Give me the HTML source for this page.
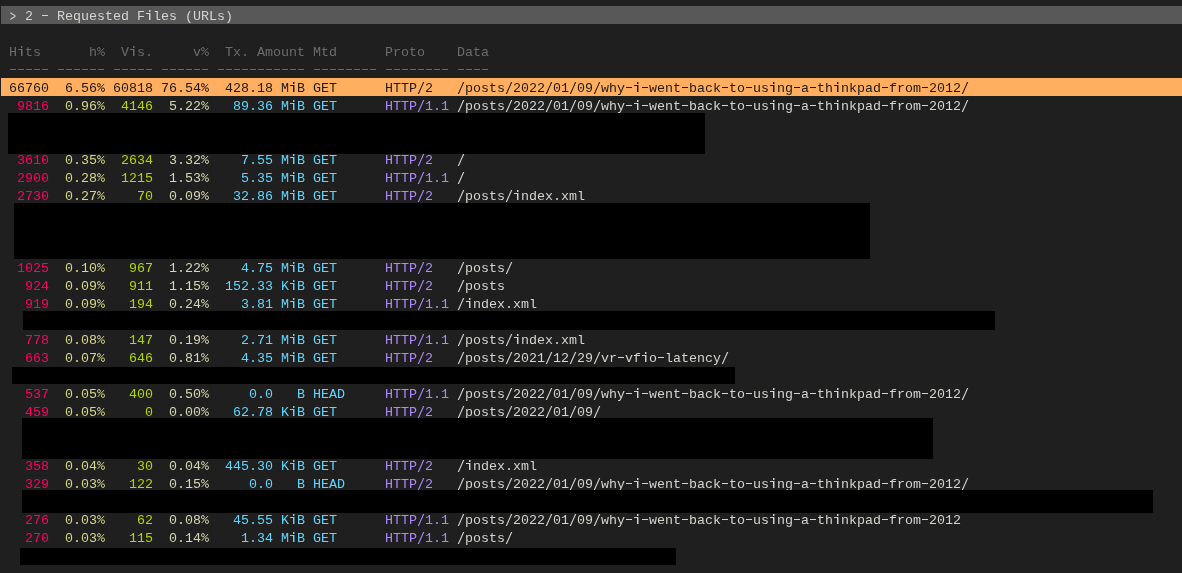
<!DOCTYPE html>
<html><head><meta charset="utf-8"><style>
html,body{margin:0;padding:0;}
body{width:1182px;height:573px;overflow:hidden;background:#1f1f1f;position:relative;
font-family:"Liberation Mono",monospace;font-size:13.333px;-webkit-font-smoothing:antialiased;}
.l{position:absolute;will-change:transform;left:1px;height:18px;line-height:18px;white-space:pre;}
.t{position:relative;top:2px;}
.bar{left:1px;right:0;background:#585858;}
.sel{left:1px;right:0;background:#ffaf5f;}
.l{color:var(--c)}.bar{--c:#d6d4ce}.sel{--c:#1a1a1a}.h{--c:#6c6c6c}
.a{--c:#ff005f;color:var(--c)}.b{--c:#d7d787;color:var(--c)}.c{--c:#afd700;color:var(--c)}.d{--c:#d7d7af;color:var(--c)}.e{--c:#5fd7ff;color:var(--c)}.f{--c:#5fd7ff;color:var(--c)}.g{--c:#af87ff;color:var(--c)}.i{--c:#d6d4ce;color:var(--c)}
.hy{position:relative;color:transparent}
.hy::after{content:"";position:absolute;left:1px;width:6px;height:1px;top:6px;background:var(--c)}
.gt{display:inline-block;transform:translateY(0.6px) scale(0.8,1.15);}
.pc{position:relative;color:transparent}
.pc svg{position:absolute;left:0;top:-3px;width:8px;height:18px;overflow:visible;fill:none;stroke:var(--c);stroke-width:0.95}
.sl{display:inline-block;transform:translateY(1.5px) scaleY(1.3);}
.ii{position:relative;color:transparent}
.ii::after{content:"";position:absolute;left:0;top:0;width:8px;height:16px;
background:linear-gradient(var(--c),var(--c)) 4px 1px/1px 2px no-repeat,linear-gradient(var(--c),var(--c)) 1px 4px/4px 1px no-repeat,linear-gradient(var(--c),var(--c)) 4px 4px/1px 7px no-repeat;}
.ii::before{content:"";position:absolute;left:0;top:0;width:8px;height:16px;opacity:.45;
background:linear-gradient(var(--c),var(--c)) 5px 1px/1px 2px no-repeat,linear-gradient(var(--c),var(--c)) 5px 4px/1px 7px no-repeat;}
.x{position:absolute;background:#000;}
</style></head><body>

<div class="l bar" style="top:6px"><span class="t"> <span class="gt">&gt;</span> 2 <span class="hy">-</span> Requested F<span class="ii">i</span>les (URLs)</span></div>
<div class="l h" style="top:42px"><span class="t"> H<span class="ii">i</span>ts      h<span class="pc">%<svg viewBox="0 0 8 18"><ellipse cx="1.9" cy="7.2" rx="1.4" ry="1.75"/><ellipse cx="6" cy="11.7" rx="1.55" ry="1.8"/><path d="M0.7 12.9L7.1 6"/></svg></span>  V<span class="ii">i</span>s.     v<span class="pc">%<svg viewBox="0 0 8 18"><ellipse cx="1.9" cy="7.2" rx="1.4" ry="1.75"/><ellipse cx="6" cy="11.7" rx="1.55" ry="1.8"/><path d="M0.7 12.9L7.1 6"/></svg></span>  Tx. Amount Mtd      Proto    Data</span></div>
<div class="l h" style="top:60px"><span class="t"> <span class="hy">-</span><span class="hy">-</span><span class="hy">-</span><span class="hy">-</span><span class="hy">-</span> <span class="hy">-</span><span class="hy">-</span><span class="hy">-</span><span class="hy">-</span><span class="hy">-</span><span class="hy">-</span> <span class="hy">-</span><span class="hy">-</span><span class="hy">-</span><span class="hy">-</span><span class="hy">-</span> <span class="hy">-</span><span class="hy">-</span><span class="hy">-</span><span class="hy">-</span><span class="hy">-</span><span class="hy">-</span> <span class="hy">-</span><span class="hy">-</span><span class="hy">-</span><span class="hy">-</span><span class="hy">-</span><span class="hy">-</span><span class="hy">-</span><span class="hy">-</span><span class="hy">-</span><span class="hy">-</span><span class="hy">-</span> <span class="hy">-</span><span class="hy">-</span><span class="hy">-</span><span class="hy">-</span><span class="hy">-</span><span class="hy">-</span><span class="hy">-</span><span class="hy">-</span> <span class="hy">-</span><span class="hy">-</span><span class="hy">-</span><span class="hy">-</span><span class="hy">-</span><span class="hy">-</span><span class="hy">-</span><span class="hy">-</span> <span class="hy">-</span><span class="hy">-</span><span class="hy">-</span><span class="hy">-</span></span></div>
<div class="l sel" style="top:78px"><span class="t"> 66760  6.56<span class="pc">%<svg viewBox="0 0 8 18"><ellipse cx="1.9" cy="7.2" rx="1.4" ry="1.75"/><ellipse cx="6" cy="11.7" rx="1.55" ry="1.8"/><path d="M0.7 12.9L7.1 6"/></svg></span> 60818 76.54<span class="pc">%<svg viewBox="0 0 8 18"><ellipse cx="1.9" cy="7.2" rx="1.4" ry="1.75"/><ellipse cx="6" cy="11.7" rx="1.55" ry="1.8"/><path d="M0.7 12.9L7.1 6"/></svg></span>  428.18 M<span class="ii">i</span>B GET      HTTP<span class="sl">/</span>2   <span class="sl">/</span>posts<span class="sl">/</span>2022<span class="sl">/</span>01<span class="sl">/</span>09<span class="sl">/</span>why<span class="hy">-</span><span class="ii">i</span><span class="hy">-</span>went<span class="hy">-</span>back<span class="hy">-</span>to<span class="hy">-</span>us<span class="ii">i</span>ng<span class="hy">-</span>a<span class="hy">-</span>th<span class="ii">i</span>nkpad<span class="hy">-</span>from<span class="hy">-</span>2012<span class="sl">/</span></span></div>
<div class="l" style="top:96px"><span class="t"><span class="a">  9816</span><span class="b">  0.96<span class="pc">%<svg viewBox="0 0 8 18"><ellipse cx="1.9" cy="7.2" rx="1.4" ry="1.75"/><ellipse cx="6" cy="11.7" rx="1.55" ry="1.8"/><path d="M0.7 12.9L7.1 6"/></svg></span></span><span class="c">  4146</span><span class="d">  5.22<span class="pc">%<svg viewBox="0 0 8 18"><ellipse cx="1.9" cy="7.2" rx="1.4" ry="1.75"/><ellipse cx="6" cy="11.7" rx="1.55" ry="1.8"/><path d="M0.7 12.9L7.1 6"/></svg></span></span><span class="e">   89.36 M<span class="ii">i</span>B</span><span class="f"> GET     </span><span class="g"> HTTP<span class="sl">/</span>1.1</span><span class="i"> <span class="sl">/</span>posts<span class="sl">/</span>2022<span class="sl">/</span>01<span class="sl">/</span>09<span class="sl">/</span>why<span class="hy">-</span><span class="ii">i</span><span class="hy">-</span>went<span class="hy">-</span>back<span class="hy">-</span>to<span class="hy">-</span>us<span class="ii">i</span>ng<span class="hy">-</span>a<span class="hy">-</span>th<span class="ii">i</span>nkpad<span class="hy">-</span>from<span class="hy">-</span>2012<span class="sl">/</span></span></span></div>
<div class="l" style="top:150px"><span class="t"><span class="a">  3610</span><span class="b">  0.35<span class="pc">%<svg viewBox="0 0 8 18"><ellipse cx="1.9" cy="7.2" rx="1.4" ry="1.75"/><ellipse cx="6" cy="11.7" rx="1.55" ry="1.8"/><path d="M0.7 12.9L7.1 6"/></svg></span></span><span class="c">  2634</span><span class="d">  3.32<span class="pc">%<svg viewBox="0 0 8 18"><ellipse cx="1.9" cy="7.2" rx="1.4" ry="1.75"/><ellipse cx="6" cy="11.7" rx="1.55" ry="1.8"/><path d="M0.7 12.9L7.1 6"/></svg></span></span><span class="e">    7.55 M<span class="ii">i</span>B</span><span class="f"> GET     </span><span class="g"> HTTP<span class="sl">/</span>2  </span><span class="i"> <span class="sl">/</span></span></span></div>
<div class="l" style="top:168px"><span class="t"><span class="a">  2900</span><span class="b">  0.28<span class="pc">%<svg viewBox="0 0 8 18"><ellipse cx="1.9" cy="7.2" rx="1.4" ry="1.75"/><ellipse cx="6" cy="11.7" rx="1.55" ry="1.8"/><path d="M0.7 12.9L7.1 6"/></svg></span></span><span class="c">  1215</span><span class="d">  1.53<span class="pc">%<svg viewBox="0 0 8 18"><ellipse cx="1.9" cy="7.2" rx="1.4" ry="1.75"/><ellipse cx="6" cy="11.7" rx="1.55" ry="1.8"/><path d="M0.7 12.9L7.1 6"/></svg></span></span><span class="e">    5.35 M<span class="ii">i</span>B</span><span class="f"> GET     </span><span class="g"> HTTP<span class="sl">/</span>1.1</span><span class="i"> <span class="sl">/</span></span></span></div>
<div class="l" style="top:186px"><span class="t"><span class="a">  2730</span><span class="b">  0.27<span class="pc">%<svg viewBox="0 0 8 18"><ellipse cx="1.9" cy="7.2" rx="1.4" ry="1.75"/><ellipse cx="6" cy="11.7" rx="1.55" ry="1.8"/><path d="M0.7 12.9L7.1 6"/></svg></span></span><span class="c">    70</span><span class="d">  0.09<span class="pc">%<svg viewBox="0 0 8 18"><ellipse cx="1.9" cy="7.2" rx="1.4" ry="1.75"/><ellipse cx="6" cy="11.7" rx="1.55" ry="1.8"/><path d="M0.7 12.9L7.1 6"/></svg></span></span><span class="e">   32.86 M<span class="ii">i</span>B</span><span class="f"> GET     </span><span class="g"> HTTP<span class="sl">/</span>2  </span><span class="i"> <span class="sl">/</span>posts<span class="sl">/</span><span class="ii">i</span>ndex.xml</span></span></div>
<div class="l" style="top:258px"><span class="t"><span class="a">  1025</span><span class="b">  0.10<span class="pc">%<svg viewBox="0 0 8 18"><ellipse cx="1.9" cy="7.2" rx="1.4" ry="1.75"/><ellipse cx="6" cy="11.7" rx="1.55" ry="1.8"/><path d="M0.7 12.9L7.1 6"/></svg></span></span><span class="c">   967</span><span class="d">  1.22<span class="pc">%<svg viewBox="0 0 8 18"><ellipse cx="1.9" cy="7.2" rx="1.4" ry="1.75"/><ellipse cx="6" cy="11.7" rx="1.55" ry="1.8"/><path d="M0.7 12.9L7.1 6"/></svg></span></span><span class="e">    4.75 M<span class="ii">i</span>B</span><span class="f"> GET     </span><span class="g"> HTTP<span class="sl">/</span>2  </span><span class="i"> <span class="sl">/</span>posts<span class="sl">/</span></span></span></div>
<div class="l" style="top:276px"><span class="t"><span class="a">   924</span><span class="b">  0.09<span class="pc">%<svg viewBox="0 0 8 18"><ellipse cx="1.9" cy="7.2" rx="1.4" ry="1.75"/><ellipse cx="6" cy="11.7" rx="1.55" ry="1.8"/><path d="M0.7 12.9L7.1 6"/></svg></span></span><span class="c">   911</span><span class="d">  1.15<span class="pc">%<svg viewBox="0 0 8 18"><ellipse cx="1.9" cy="7.2" rx="1.4" ry="1.75"/><ellipse cx="6" cy="11.7" rx="1.55" ry="1.8"/><path d="M0.7 12.9L7.1 6"/></svg></span></span><span class="e">  152.33 K<span class="ii">i</span>B</span><span class="f"> GET     </span><span class="g"> HTTP<span class="sl">/</span>2  </span><span class="i"> <span class="sl">/</span>posts</span></span></div>
<div class="l" style="top:294px"><span class="t"><span class="a">   919</span><span class="b">  0.09<span class="pc">%<svg viewBox="0 0 8 18"><ellipse cx="1.9" cy="7.2" rx="1.4" ry="1.75"/><ellipse cx="6" cy="11.7" rx="1.55" ry="1.8"/><path d="M0.7 12.9L7.1 6"/></svg></span></span><span class="c">   194</span><span class="d">  0.24<span class="pc">%<svg viewBox="0 0 8 18"><ellipse cx="1.9" cy="7.2" rx="1.4" ry="1.75"/><ellipse cx="6" cy="11.7" rx="1.55" ry="1.8"/><path d="M0.7 12.9L7.1 6"/></svg></span></span><span class="e">    3.81 M<span class="ii">i</span>B</span><span class="f"> GET     </span><span class="g"> HTTP<span class="sl">/</span>1.1</span><span class="i"> <span class="sl">/</span><span class="ii">i</span>ndex.xml</span></span></div>
<div class="l" style="top:330px"><span class="t"><span class="a">   778</span><span class="b">  0.08<span class="pc">%<svg viewBox="0 0 8 18"><ellipse cx="1.9" cy="7.2" rx="1.4" ry="1.75"/><ellipse cx="6" cy="11.7" rx="1.55" ry="1.8"/><path d="M0.7 12.9L7.1 6"/></svg></span></span><span class="c">   147</span><span class="d">  0.19<span class="pc">%<svg viewBox="0 0 8 18"><ellipse cx="1.9" cy="7.2" rx="1.4" ry="1.75"/><ellipse cx="6" cy="11.7" rx="1.55" ry="1.8"/><path d="M0.7 12.9L7.1 6"/></svg></span></span><span class="e">    2.71 M<span class="ii">i</span>B</span><span class="f"> GET     </span><span class="g"> HTTP<span class="sl">/</span>1.1</span><span class="i"> <span class="sl">/</span>posts<span class="sl">/</span><span class="ii">i</span>ndex.xml</span></span></div>
<div class="l" style="top:348px"><span class="t"><span class="a">   663</span><span class="b">  0.07<span class="pc">%<svg viewBox="0 0 8 18"><ellipse cx="1.9" cy="7.2" rx="1.4" ry="1.75"/><ellipse cx="6" cy="11.7" rx="1.55" ry="1.8"/><path d="M0.7 12.9L7.1 6"/></svg></span></span><span class="c">   646</span><span class="d">  0.81<span class="pc">%<svg viewBox="0 0 8 18"><ellipse cx="1.9" cy="7.2" rx="1.4" ry="1.75"/><ellipse cx="6" cy="11.7" rx="1.55" ry="1.8"/><path d="M0.7 12.9L7.1 6"/></svg></span></span><span class="e">    4.35 M<span class="ii">i</span>B</span><span class="f"> GET     </span><span class="g"> HTTP<span class="sl">/</span>2  </span><span class="i"> <span class="sl">/</span>posts<span class="sl">/</span>2021<span class="sl">/</span>12<span class="sl">/</span>29<span class="sl">/</span>vr<span class="hy">-</span>vf<span class="ii">i</span>o<span class="hy">-</span>latency<span class="sl">/</span></span></span></div>
<div class="l" style="top:384px"><span class="t"><span class="a">   537</span><span class="b">  0.05<span class="pc">%<svg viewBox="0 0 8 18"><ellipse cx="1.9" cy="7.2" rx="1.4" ry="1.75"/><ellipse cx="6" cy="11.7" rx="1.55" ry="1.8"/><path d="M0.7 12.9L7.1 6"/></svg></span></span><span class="c">   400</span><span class="d">  0.50<span class="pc">%<svg viewBox="0 0 8 18"><ellipse cx="1.9" cy="7.2" rx="1.4" ry="1.75"/><ellipse cx="6" cy="11.7" rx="1.55" ry="1.8"/><path d="M0.7 12.9L7.1 6"/></svg></span></span><span class="e">     0.0   B</span><span class="f"> HEAD    </span><span class="g"> HTTP<span class="sl">/</span>1.1</span><span class="i"> <span class="sl">/</span>posts<span class="sl">/</span>2022<span class="sl">/</span>01<span class="sl">/</span>09<span class="sl">/</span>why<span class="hy">-</span><span class="ii">i</span><span class="hy">-</span>went<span class="hy">-</span>back<span class="hy">-</span>to<span class="hy">-</span>us<span class="ii">i</span>ng<span class="hy">-</span>a<span class="hy">-</span>th<span class="ii">i</span>nkpad<span class="hy">-</span>from<span class="hy">-</span>2012<span class="sl">/</span></span></span></div>
<div class="l" style="top:402px"><span class="t"><span class="a">   459</span><span class="b">  0.05<span class="pc">%<svg viewBox="0 0 8 18"><ellipse cx="1.9" cy="7.2" rx="1.4" ry="1.75"/><ellipse cx="6" cy="11.7" rx="1.55" ry="1.8"/><path d="M0.7 12.9L7.1 6"/></svg></span></span><span class="c">     0</span><span class="d">  0.00<span class="pc">%<svg viewBox="0 0 8 18"><ellipse cx="1.9" cy="7.2" rx="1.4" ry="1.75"/><ellipse cx="6" cy="11.7" rx="1.55" ry="1.8"/><path d="M0.7 12.9L7.1 6"/></svg></span></span><span class="e">   62.78 K<span class="ii">i</span>B</span><span class="f"> GET     </span><span class="g"> HTTP<span class="sl">/</span>2  </span><span class="i"> <span class="sl">/</span>posts<span class="sl">/</span>2022<span class="sl">/</span>01<span class="sl">/</span>09<span class="sl">/</span></span></span></div>
<div class="l" style="top:456px"><span class="t"><span class="a">   358</span><span class="b">  0.04<span class="pc">%<svg viewBox="0 0 8 18"><ellipse cx="1.9" cy="7.2" rx="1.4" ry="1.75"/><ellipse cx="6" cy="11.7" rx="1.55" ry="1.8"/><path d="M0.7 12.9L7.1 6"/></svg></span></span><span class="c">    30</span><span class="d">  0.04<span class="pc">%<svg viewBox="0 0 8 18"><ellipse cx="1.9" cy="7.2" rx="1.4" ry="1.75"/><ellipse cx="6" cy="11.7" rx="1.55" ry="1.8"/><path d="M0.7 12.9L7.1 6"/></svg></span></span><span class="e">  445.30 K<span class="ii">i</span>B</span><span class="f"> GET     </span><span class="g"> HTTP<span class="sl">/</span>2  </span><span class="i"> <span class="sl">/</span><span class="ii">i</span>ndex.xml</span></span></div>
<div class="l" style="top:474px"><span class="t"><span class="a">   329</span><span class="b">  0.03<span class="pc">%<svg viewBox="0 0 8 18"><ellipse cx="1.9" cy="7.2" rx="1.4" ry="1.75"/><ellipse cx="6" cy="11.7" rx="1.55" ry="1.8"/><path d="M0.7 12.9L7.1 6"/></svg></span></span><span class="c">   122</span><span class="d">  0.15<span class="pc">%<svg viewBox="0 0 8 18"><ellipse cx="1.9" cy="7.2" rx="1.4" ry="1.75"/><ellipse cx="6" cy="11.7" rx="1.55" ry="1.8"/><path d="M0.7 12.9L7.1 6"/></svg></span></span><span class="e">     0.0   B</span><span class="f"> HEAD    </span><span class="g"> HTTP<span class="sl">/</span>2  </span><span class="i"> <span class="sl">/</span>posts<span class="sl">/</span>2022<span class="sl">/</span>01<span class="sl">/</span>09<span class="sl">/</span>why<span class="hy">-</span><span class="ii">i</span><span class="hy">-</span>went<span class="hy">-</span>back<span class="hy">-</span>to<span class="hy">-</span>us<span class="ii">i</span>ng<span class="hy">-</span>a<span class="hy">-</span>th<span class="ii">i</span>nkpad<span class="hy">-</span>from<span class="hy">-</span>2012<span class="sl">/</span></span></span></div>
<div class="l" style="top:510px"><span class="t"><span class="a">   276</span><span class="b">  0.03<span class="pc">%<svg viewBox="0 0 8 18"><ellipse cx="1.9" cy="7.2" rx="1.4" ry="1.75"/><ellipse cx="6" cy="11.7" rx="1.55" ry="1.8"/><path d="M0.7 12.9L7.1 6"/></svg></span></span><span class="c">    62</span><span class="d">  0.08<span class="pc">%<svg viewBox="0 0 8 18"><ellipse cx="1.9" cy="7.2" rx="1.4" ry="1.75"/><ellipse cx="6" cy="11.7" rx="1.55" ry="1.8"/><path d="M0.7 12.9L7.1 6"/></svg></span></span><span class="e">   45.55 K<span class="ii">i</span>B</span><span class="f"> GET     </span><span class="g"> HTTP<span class="sl">/</span>1.1</span><span class="i"> <span class="sl">/</span>posts<span class="sl">/</span>2022<span class="sl">/</span>01<span class="sl">/</span>09<span class="sl">/</span>why<span class="hy">-</span><span class="ii">i</span><span class="hy">-</span>went<span class="hy">-</span>back<span class="hy">-</span>to<span class="hy">-</span>us<span class="ii">i</span>ng<span class="hy">-</span>a<span class="hy">-</span>th<span class="ii">i</span>nkpad<span class="hy">-</span>from<span class="hy">-</span>2012</span></span></div>
<div class="l" style="top:528px"><span class="t"><span class="a">   270</span><span class="b">  0.03<span class="pc">%<svg viewBox="0 0 8 18"><ellipse cx="1.9" cy="7.2" rx="1.4" ry="1.75"/><ellipse cx="6" cy="11.7" rx="1.55" ry="1.8"/><path d="M0.7 12.9L7.1 6"/></svg></span></span><span class="c">   115</span><span class="d">  0.14<span class="pc">%<svg viewBox="0 0 8 18"><ellipse cx="1.9" cy="7.2" rx="1.4" ry="1.75"/><ellipse cx="6" cy="11.7" rx="1.55" ry="1.8"/><path d="M0.7 12.9L7.1 6"/></svg></span></span><span class="e">    1.34 M<span class="ii">i</span>B</span><span class="f"> GET     </span><span class="g"> HTTP<span class="sl">/</span>1.1</span><span class="i"> <span class="sl">/</span>posts<span class="sl">/</span></span></span></div>
<div class="x" style="left:8px;top:113px;width:697px;height:41px"></div>
<div class="x" style="left:14px;top:203px;width:856px;height:56px"></div>
<div class="x" style="left:23px;top:311px;width:972px;height:19px"></div>
<div class="x" style="left:12px;top:367px;width:723px;height:17px"></div>
<div class="x" style="left:22px;top:418px;width:911px;height:41px"></div>
<div class="x" style="left:22px;top:490px;width:1131px;height:23px"></div>
<div class="x" style="left:20px;top:548px;width:656px;height:17px"></div>
</body></html>
